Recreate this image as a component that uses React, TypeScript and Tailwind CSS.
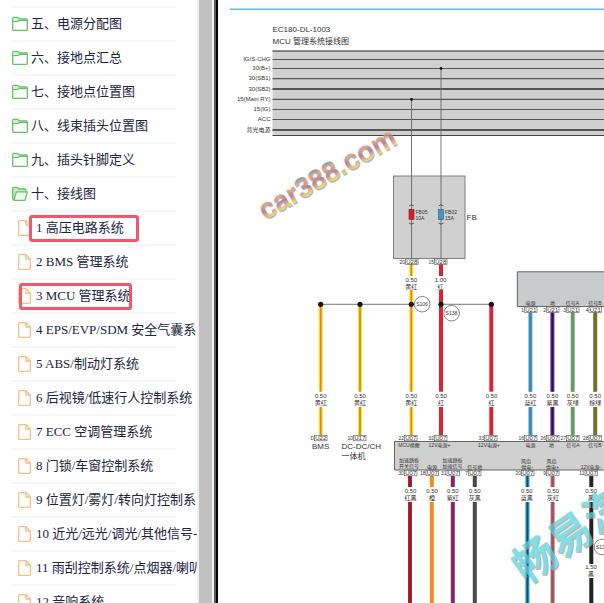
interface MenuItem {
  label: string;
  kind: "folder" | "open" | "file";
  mark?: string;
}

interface Wire {
  x: number;
  color: string;
  core?: string;
  parts: [number, number][];
}

interface Pin {
  x: number;
  y: number;
  num: string;
  code: string;
}

const items: MenuItem[] = [
  { label: "五、电源分配图", kind: "folder" },
  { label: "六、接地点汇总", kind: "folder" },
  { label: "七、接地点位置图", kind: "folder" },
  { label: "八、线束插头位置图", kind: "folder" },
  { label: "九、插头针脚定义", kind: "folder" },
  { label: "十、接线图", kind: "open" },
  { label: "1 高压电路系统", kind: "file", mark: "left-[17px] w-[110px]" },
  { label: "2 BMS 管理系统", kind: "file" },
  { label: "3 MCU 管理系统", kind: "file", mark: "left-[7px] w-[113px]" },
  { label: "4 EPS/EVP/SDM 安全气囊系", kind: "file" },
  { label: "5 ABS/制动灯系统", kind: "file" },
  { label: "6 后视镜/低速行人控制系统", kind: "file" },
  { label: "7 ECC 空调管理系统", kind: "file" },
  { label: "8 门锁/车窗控制系统", kind: "file" },
  { label: "9 位置灯/雾灯/转向灯控制系", kind: "file" },
  { label: "10 近光/远光/调光/其他信号-", kind: "file" },
  { label: "11 雨刮控制系统/点烟器/喇叭", kind: "file" },
  { label: "12 音响系统", kind: "file" },
];

const buses = [
  { y: 59.5, w: 1.2, label: "IG/S-CHG" },
  { y: 68.5, w: 1, label: "30(B+)" },
  { y: 78.7, w: 1.2, label: "30(SB1)" },
  { y: 89, w: 1.8, label: "30(SB2)" },
  { y: 99.4, w: 1.2, label: "15(Main RY)" },
  { y: 109.5, w: 1.2, label: "15(IG)" },
  { y: 119.5, w: 1.2, label: "ACC" },
  { y: 130, w: 1.8, label: "背光电源" },
];

const mid: [number, number][] = [[304, 391.7], [407, 435.5]];
const right: [number, number][] = [[312.5, 391.7], [407, 435.5]];
const low: [number, number][] = [[476, 487], [502, 603]];

const wires: Wire[] = [
  { x: 411.3, color: "#fbe32a", core: "#e5821f", parts: [[264, 276], [290, 304]] },
  { x: 441, color: "#dc2430", parts: [[264, 276], [290, 304]] },
  { x: 320.7, color: "#fbe32a", core: "#e5821f", parts: mid },
  { x: 360, color: "#fbe32a", core: "#c88a1c", parts: mid },
  { x: 411.3, color: "#fbe32a", core: "#e5821f", parts: mid },
  { x: 441, color: "#dc2430", parts: mid },
  { x: 491.3, color: "#dc2430", parts: mid },
  { x: 530.4, color: "#4aa3d0", core: "#3c7fa4", parts: right },
  { x: 552.4, color: "#5a2a92", core: "#2f1450", parts: right },
  { x: 572.7, color: "#68a468", core: "#62986a", parts: right },
  { x: 595.2, color: "#8a6a2c", core: "#5c7a30", parts: right },
  { x: 410, color: "#c01e2a", core: "#86202a", parts: low },
  { x: 431.8, color: "#f28c1e", parts: low },
  { x: 452.8, color: "#7c2a7e", core: "#8e2458", parts: low },
  { x: 474.8, color: "#484848", parts: low },
  { x: 527.4, color: "#1e9cd0", core: "#14506e", parts: low },
  { x: 552.6, color: "#8c7076", core: "#c04450", parts: low },
  { x: 591.3, color: "#222222", parts: [[476, 487], [502, 564], [578, 603]] },
];

const pins: Pin[] = [
  { x: 405, y: 259, num: "20", code: "U28" },
  { x: 434, y: 259, num: "15", code: "U28" },
  { x: 314, y: 435.5, num: "D", code: "U22" },
  { x: 353, y: 435.5, num: "10", code: "U17" },
  { x: 404, y: 435.5, num: "22", code: "U07" },
  { x: 434, y: 435.5, num: "32", code: "U07" },
  { x: 484, y: 435.5, num: "33", code: "U07" },
  { x: 524, y: 435.5, num: "16", code: "U07" },
  { x: 546, y: 435.5, num: "26", code: "U07" },
  { x: 566, y: 435.5, num: "27", code: "U07" },
  { x: 588.5, y: 435.5, num: "28", code: "U07" },
  { x: 524, y: 307, num: "1", code: "U21" },
  { x: 546, y: 307, num: "2", code: "U21" },
  { x: 566, y: 307, num: "3", code: "U21" },
  { x: 588.5, y: 307, num: "4", code: "U21" },
  { x: 404, y: 470.5, num: "30", code: "U07" },
  { x: 425.5, y: 470.5, num: "18", code: "U07" },
  { x: 446.5, y: 470.5, num: "31", code: "U07" },
  { x: 468, y: 470.5, num: "7", code: "U07" },
  { x: 521, y: 470.5, num: "20", code: "U07" },
  { x: 546, y: 470.5, num: "9", code: "U07" },
  { x: 584.5, y: 470.5, num: "11", code: "U07" },
];

// x, baseline of the gauge, gauge, colour name
const gauges: [number, number, string, string][] = [
  [411.3, 282, "0.50", "黄红"],
  [440.5, 282, "1.00", "红"],
  [320.7, 398, "0.50", "黄红"],
  [360, 398, "0.50", "黄红"],
  [411.3, 398, "0.50", "黄红"],
  [441, 398, "0.50", "红"],
  [491.5, 398, "0.50", "红"],
  [530.4, 398, "0.50", "蓝红"],
  [552.4, 398, "0.50", "紫黑"],
  [572.7, 398, "0.50", "灰绿"],
  [595.2, 398, "0.50", "棕绿"],
  [410.5, 493, "0.50", "红黑"],
  [432, 493, "0.50", "橙"],
  [452.8, 493, "0.50", "紫红"],
  [474.8, 493, "0.50", "灰黑"],
  [526.8, 493, "0.50", "蓝黑"],
  [553, 493, "0.50", "灰红"],
  [591, 493, "0.50", "黑"],
  [591, 569, "1.50", "黑"],
];

const portNames: [number, number, string][] = [
  [530.4, 304.5, "电源"],
  [552.4, 304.5, "地"],
  [572.5, 304.5, "信号A"],
  [595, 304.5, "信号B"],
  [409, 446.5, "MCU唤醒"],
  [439.5, 446.5, "12V电源+"],
  [489, 446.5, "12V电源+"],
  [530.4, 446.5, "电源"],
  [551.5, 446.5, "地"],
  [573, 446.5, "信号A"],
  [595, 446.5, "信号B"],
  [409, 461.5, "加速踏板"],
  [409, 467.5, "开关信号"],
  [432, 468.5, "电源"],
  [452.6, 461.5, "加速踏板"],
  [452.6, 467.5, "加速信号"],
  [474.8, 468.5, "信号地"],
  [526, 462.5, "风扇"],
  [527, 468.5, "供电-"],
  [551.5, 462.5, "风扇"],
  [552.5, 468.5, "供电+"],
  [591, 468.5, "12V电源-"],
];

export default function App() {
  return (
    <div className="flex h-screen overflow-hidden bg-white">
      <Sidebar />

      {/* scroll track and frame edge */}
      <div className="flex w-[21px] shrink-0">
        <div className="w-[2px] bg-[#f0f0f0]" />
        <div className="w-[13px] bg-[#c1c1c1]" />
        <div className="w-[2px] bg-[#f4f4f4]" />
        <div className="w-[2px] bg-[#5a5a5a]" />
        <div className="w-[2px] bg-black" />
      </div>

      <main className="min-w-0 flex-1 overflow-hidden">
        <Diagram />
      </main>
    </div>
  );
}

function Sidebar() {
  return (
    <nav className="w-[197px] shrink-0 overflow-hidden font-['Liberation_Serif','Noto_Sans_CJK_SC',serif] text-[13px] leading-4 text-[#1b2440]">
      <div className="mr-5 ml-3 h-2 border-b-2 border-[#f5f6f7]" />
      <ul className="mr-5 ml-3">
        {items.map((item) => (
          <li
            key={item.label}
            className="relative h-[34px] border-b-2 border-[#f5f6f7]"
          >
            <a
              href="#"
              className={`flex h-full items-center whitespace-nowrap ${
                item.kind === "file" ? "gap-[5px] pl-[6px]" : "gap-[3px]"
              }`}
            >
              {item.kind === "file" ? <FileIcon /> : <FolderIcon open={item.kind === "open"} />}
              <span>{item.label}</span>
            </a>
            {item.mark && (
              <span
                className={`pointer-events-none absolute top-[3px] h-[27px] rounded-[3px] border-[3px] border-[#f0596a] ${item.mark}`}
              />
            )}
          </li>
        ))}
      </ul>
    </nav>
  );
}

function FolderIcon({ open }: { open: boolean }) {
  return (
    <svg width="16" height="16" viewBox="0 0 16 16" fill="none" stroke="#66c266" strokeWidth="1.3" strokeLinejoin="round" className="shrink-0">
      {open ? (
        <>
          <path d="M2.4 14.2 L.7 13 V2.2 Q.7 1.3 1.6 1.3 H5.4 L6.8 3 H13 Q13.8 3 13.8 4 V5.6" fill="#c4e9c4" />
          <path d="M4.4 5.8 H15.4 L13 14.3 H2 Z" fill="#effaef" />
        </>
      ) : (
        <>
          <path d="M.7 13.4 V2.2 Q.7 1.3 1.6 1.3 H5.6 L7.2 3 H14.4 Q15.3 3 15.3 4 V13.4 Q15.3 14.3 14.4 14.3 H1.6 Q.7 14.3 .7 13.4 Z" />
          <path d="M.7 5.4 H6 L7.4 4.4 H15.3" />
          <path d="M1.4 2 H5.3 L6.7 3.8 L5.8 4.8 H1.4 Z" fill="#d3efd3" stroke="none" />
        </>
      )}
    </svg>
  );
}

function FileIcon() {
  return (
    <svg width="13" height="16" viewBox="0 0 13 16" fill="none" stroke="#f6bf85" strokeWidth="1.3" strokeLinejoin="round" className="shrink-0">
      <path d="M.7 1.6 Q.7 .7 1.6 .7 H8 L12.3 5 V14.4 Q12.3 15.3 11.4 15.3 H1.6 Q.7 15.3 .7 14.4 Z" />
      <path d="M8 .7 V5 H12.3" />
    </svg>
  );
}

function Diagram() {
  return (
    <svg
      viewBox="218 0 386 603"
      className="block h-auto w-full font-['Liberation_Sans','Noto_Sans_CJK_SC',sans-serif]"
      fill="#333"
    >
      <defs>
        <linearGradient id="brand" x1="0" y1="0" x2="0" y2="1">
          <stop offset="0.15" stopColor="#5f86ad" />
          <stop offset="0.36" stopColor="#e09a70" />
          <stop offset="0.56" stopColor="#a0708e" />
          <stop offset="0.68" stopColor="#d89a80" />
          <stop offset="0.8" stopColor="#e6dc50" />
        </linearGradient>
      </defs>

      <path d="M230 9.3 H604" stroke="#5dc3d6" strokeWidth="1.5" />

      <text x="272.5" y="31.5" fontSize="8">EC180-DL-1003</text>
      <text x="272.5" y="44" fontSize="8">MCU 管理系统接线图</text>

      {/* bus bars */}
      <rect x="272.5" y="50.5" width="340" height="85" fill="#d0d0d0" />
      <path d="M272.5 51.2 H604" stroke="#777" strokeWidth="1.8" />
      <path d="M272.5 135.5 H604" stroke="#444" />
      {buses.map((b) => (
        <g key={b.label}>
          <path d={`M272.5 ${b.y} H604`} stroke="#555" strokeWidth={b.w} />
          <text x="270.5" y={b.y + 1.7} fontSize="6" textAnchor="end">
            {b.label}
          </text>
        </g>
      ))}

      {/* fuse box */}
      <rect x="393.5" y="176" width="71.5" height="82.5" fill="#d0d0d0" stroke="#666" strokeWidth="0.8" />
      <path d="M411.5 99.5 V259 M441 68.5 V259" stroke="#666" strokeWidth="0.9" />
      <circle cx="411.5" cy="99.4" r="1.4" fill="#111" />
      <circle cx="441" cy="68.5" r="1.4" fill="#111" />
      <path d="M409 206 Q411.5 203.5 414 206 M409 223 Q411.5 225.5 414 223 M438.5 206 Q441 203.5 443.5 206 M438.5 223 Q441 225.5 443.5 223" fill="none" stroke="#333" strokeWidth="0.7" />
      <rect x="409" y="209.3" width="5" height="10.2" fill="#d81f2c" stroke="#7a2020" strokeWidth="0.6" />
      <rect x="438.5" y="209.3" width="5" height="10.2" fill="#3f97cf" stroke="#2c5c80" strokeWidth="0.6" />
      <g fontSize="5">
        <text x="415.5" y="213.5">FB05</text>
        <text x="415.5" y="219.8">10A</text>
        <text x="445" y="213.5">FB02</text>
        <text x="445" y="219.8">15A</text>
      </g>
      <text x="466.5" y="220" fontSize="8">FB</text>

      {/* modules */}
      <path d="M604 271.8 H517.3 V306.5 H604" fill="#c9cacc" stroke="#555" strokeWidth="0.9" />
      <path d="M604 441.5 H394.5 V470 H604" fill="#d0d0d0" stroke="#555" strokeWidth="0.9" />

      {wires.map((w, i) =>
        w.parts.map(([from, to]) => (
          <g key={`${i}-${from}`}>
            <path d={`M${w.x} ${from} V${to}`} stroke={w.color} strokeWidth="4" />
            {w.core && <path d={`M${w.x} ${from} V${to}`} stroke={w.core} strokeWidth="1.7" />}
          </g>
        ))
      )}

      {/* junctions */}
      <path d="M320.7 304.3 H422 M441 304.3 H491.3" stroke="#555" strokeWidth="0.8" />
      {[320.7, 360, 411.3, 441, 491.3].map((x) => (
        <circle key={x} cx={x} cy="304.3" r="2.6" fill="#151515" />
      ))}
      <Splice x={422.2} y={304.2} name="S106" />
      <Splice x={451.6} y={313.2} name="S138" />
      <Splice x={602} y={547} name="S13" />

      {pins.map((p) => (
        <g key={`${p.x}-${p.y}`}>
          <rect x={p.x + 0.5} y={p.y} width="12.5" height="5.3" fill="#fff" stroke="#555" strokeWidth="0.6" />
          <text x={p.x + 6.8} y={p.y + 4.8} fontSize="6" textAnchor="middle">{p.code}</text>
          <text x={p.x} y={p.y + 4.6} fontSize="5" textAnchor="end">{p.num}</text>
        </g>
      ))}

      {gauges.map(([x, y, size, name]) => (
        <g key={`${x}-${y}`} fontSize="6" textAnchor="middle">
          <text x={x} y={y}>{size}</text>
          <text x={x} y={y + 6.5}>{name}</text>
        </g>
      ))}

      {portNames.map(([x, y, name]) => (
        <text key={`${x}-${y}`} x={x} y={y} fontSize="5" textAnchor="middle">
          {name}
        </text>
      ))}

      <g fontSize="8">
        <text x="312" y="449">BMS</text>
        <text x="341.5" y="449">DC-DC/CH</text>
        <text x="341.5" y="458.5">一体机</text>
      </g>

      {/* watermarks */}
      <g fontSize="28" fontWeight="700" opacity="0.85">
        <text transform="translate(266 221.5) rotate(-30)" fill="#a9a9a9">car388.com</text>
        <text transform="translate(265 220) rotate(-30)" fill="url(#brand)">car388.com</text>
      </g>
      <g fontSize="43" fontWeight="700" opacity="0.75">
        <text transform="translate(527 586) rotate(-35)" fill="#a8a29a">畅易汽</text>
        <text transform="translate(526 584.5) rotate(-35)" fill="#5fd0da">畅易汽</text>
      </g>
    </svg>
  );
}

function Splice({ x, y, name }: { x: number; y: number; name: string }) {
  return (
    <g>
      <circle cx={x} cy={y} r="7.8" fill="#fff" stroke="#555" strokeWidth="0.7" />
      <text x={x - 6} y={y + 1.8} fontSize="5">{name}</text>
    </g>
  );
}
